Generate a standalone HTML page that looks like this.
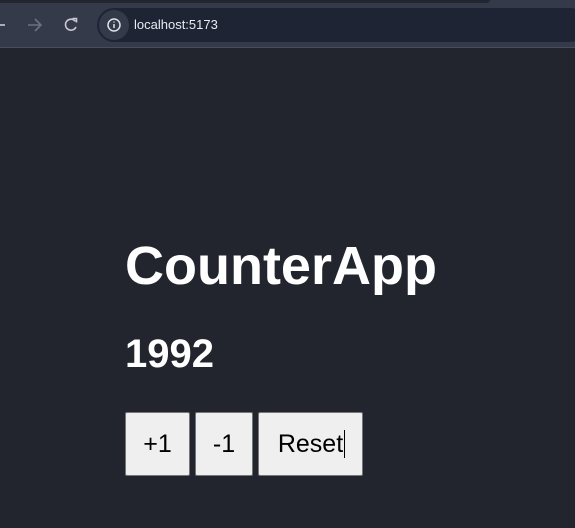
<!DOCTYPE html>
<html><head><style>
body{margin:0;width:575px;height:528px;background:#22252d;font-family:"Liberation Sans",sans-serif;overflow:hidden;position:relative}
.top{position:absolute;left:0;top:0;width:575px;height:48px;background:#353a4b}
.strip{position:absolute;left:0;top:0;width:490px;height:3px;background:#23262f;border-radius:0 0 6px 0}
.url{position:absolute;left:97px;top:8px;width:490px;height:34px;border-radius:17px;background:#1f2434}
.info{position:absolute;left:99px;top:10px;width:30px;height:30px;border-radius:15px;background:#353a4b}
.line{position:absolute;left:0;top:47px;width:575px;height:1px;background:#4a4e5c}
.ut{position:absolute;left:134px;top:17px;color:#e8eaf0;font-size:13px}
h1{position:absolute;left:125px;top:235px;margin:0;color:#fff;font-size:54px;font-weight:bold}
h2{position:absolute;left:125px;top:332px;margin:0;color:#fff;font-size:40px;font-weight:bold}
.b{position:absolute;top:412px;background:#efefef;border:1px solid #767676;border-radius:2px;box-sizing:border-box;height:64px;font-size:25px;color:#000;text-align:center;line-height:62px}
</style></head><body>
<div class="top"></div><div class="strip"></div>
<div class="url"></div><div class="info"></div><div class="line"></div>
<svg style="position:absolute;left:0;top:0" width="130" height="48">
<path d="M0 25h5" stroke="#c8cad0" stroke-width="1.6"/>
<path d="M28 25h12M35 19l6 6-6 6" stroke="#6d717c" stroke-width="1.6" fill="none"/>
<path d="M75.5 21.5A5.5 5.5 0 1 0 76 27" stroke="#c8cad0" stroke-width="1.6" fill="none"/><path d="M72.5 18.5h4v4" stroke="#c8cad0" stroke-width="1.6" fill="none"/>
<circle cx="114" cy="25" r="6" stroke="#e0e2e8" stroke-width="1.5" fill="none"/><path d="M114 24v4M114 21.5v1" stroke="#e0e2e8" stroke-width="1.5"/>
</svg>
<div class="ut">localhost:5173</div>
<h1>CounterApp</h1>
<h2>1992</h2>
<div class="b" style="left:125px;width:65px">+1</div>
<div class="b" style="left:195px;width:58px">-1</div>
<div class="b" style="left:258px;width:105px">Reset</div>
<div style="position:absolute;left:344px;top:430px;width:1px;height:28px;background:#000"></div>
</body></html>
